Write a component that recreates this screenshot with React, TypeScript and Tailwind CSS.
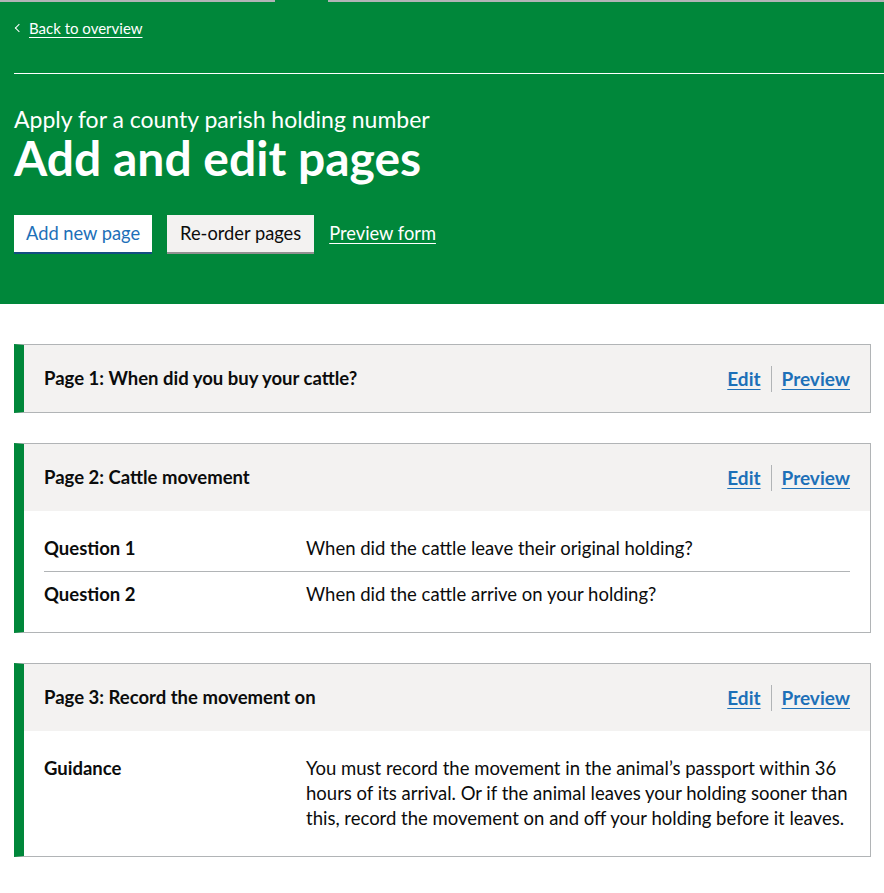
import React from "react";

const font = { fontFamily: "Lato, 'Noto Sans', sans-serif" };

function Card({ title, children }: { title: string; children?: React.ReactNode }) {
  return (
    <div className="border border-[#b1b4b6] border-l-[10px] border-l-[#00873a]">
      <div className="bg-[#f3f2f1] h-[67px] flex items-center justify-between pl-[20px] pr-[20px]">
        <h2 className="text-[18.5px] font-bold text-[#0b0c0c] leading-[25px]">{title}</h2>
        <div className="flex items-center">
          <a href="#" className="text-[19px] font-bold text-[#1d70b8] underline underline-offset-[3px] decoration-1 leading-[25px]">Edit</a>
          <span className="mx-[10px] w-px h-[26px] bg-[#b1b4b6]" />
          <a href="#" className="text-[19px] font-bold text-[#1d70b8] underline underline-offset-[3px] decoration-1 leading-[25px]">Preview</a>
        </div>
      </div>
      {children}
    </div>
  );
}

function Row({ k, v, first }: { k: string; v: string; first?: boolean }) {
  return (
    <div className={"grid grid-cols-[262px_1fr] text-[18.5px] leading-[25px] text-[#0b0c0c] " + (first ? "pb-[10px]" : "pt-[10px]")}>
      <div className="font-bold">{k}</div>
      <div>{v}</div>
    </div>
  );
}

export default function App() {
  return (
    <div className="w-full min-h-[893px] bg-white overflow-hidden" style={font}>
      <div className="flex h-[2px] bg-[#b1b4b6]">
        <div className="ml-[275px] w-[53px] bg-[#00873a]" />
      </div>
      <div className="bg-[#00873a] pl-[14px] pt-[14px] pb-[52px]">
        <a href="#" className="flex items-center text-white text-[15px] leading-[24px] h-[24px]">
          <span className="inline-block w-[6px] h-[6px] border-l border-b border-white rotate-45 ml-[2px] mr-[7px]" />
          <span className="underline underline-offset-[3px] decoration-1">Back to overview</span>
        </a>
        <div className="mt-[33px] h-px bg-white" />
        <p className="mt-[31px] text-white text-[23px] leading-[28px]">Apply for a county parish holding number</p>
        <h1 className="text-white text-[48px] font-bold leading-[50px]">Add and edit pages</h1>
        <div className="mt-[32px] flex items-center gap-[15px]">
          <button className="h-[37px] px-[12px] bg-white text-[#1d70b8] text-[18.3px] leading-[25px] shadow-[0_2px_0_#144e81]">Add new page</button>
          <button className="h-[37px] px-[13px] bg-[#f3f2f1] text-[#0b0c0c] text-[18.3px] leading-[25px] shadow-[0_2px_0_#929191]">Re-order pages</button>
          <a href="#" className="text-white text-[18.3px] leading-[25px] underline underline-offset-[3px] decoration-1">Preview form</a>
        </div>
      </div>
      <div className="pl-[14px] pr-[13px] pt-[40px] flex flex-col gap-[30px]">
        <Card title="Page 1: When did you buy your cattle?" />
        <Card title="Page 2: Cattle movement">
          <div className="px-[20px] pt-[25px] pb-[25px]">
            <Row k="Question 1" v="When did the cattle leave their original holding?" first />
            <div className="h-px bg-[#b1b4b6]" />
            <Row k="Question 2" v="When did the cattle arrive on your holding?" />
          </div>
        </Card>
        <Card title="Page 3: Record the movement on">
          <div className="px-[20px] pt-[25px] pb-[25px]">
            <div className="grid grid-cols-[262px_1fr] text-[18.5px] leading-[25px] text-[#0b0c0c]">
              <div className="font-bold">Guidance</div>
              <div className="whitespace-nowrap">
                You must record the movement in the animal’s passport within 36
                <br />
                hours of its arrival. Or if the animal leaves your holding sooner than
                <br />
                this, record the movement on and off your holding before it leaves.
              </div>
            </div>
          </div>
        </Card>
      </div>
    </div>
  );
}
